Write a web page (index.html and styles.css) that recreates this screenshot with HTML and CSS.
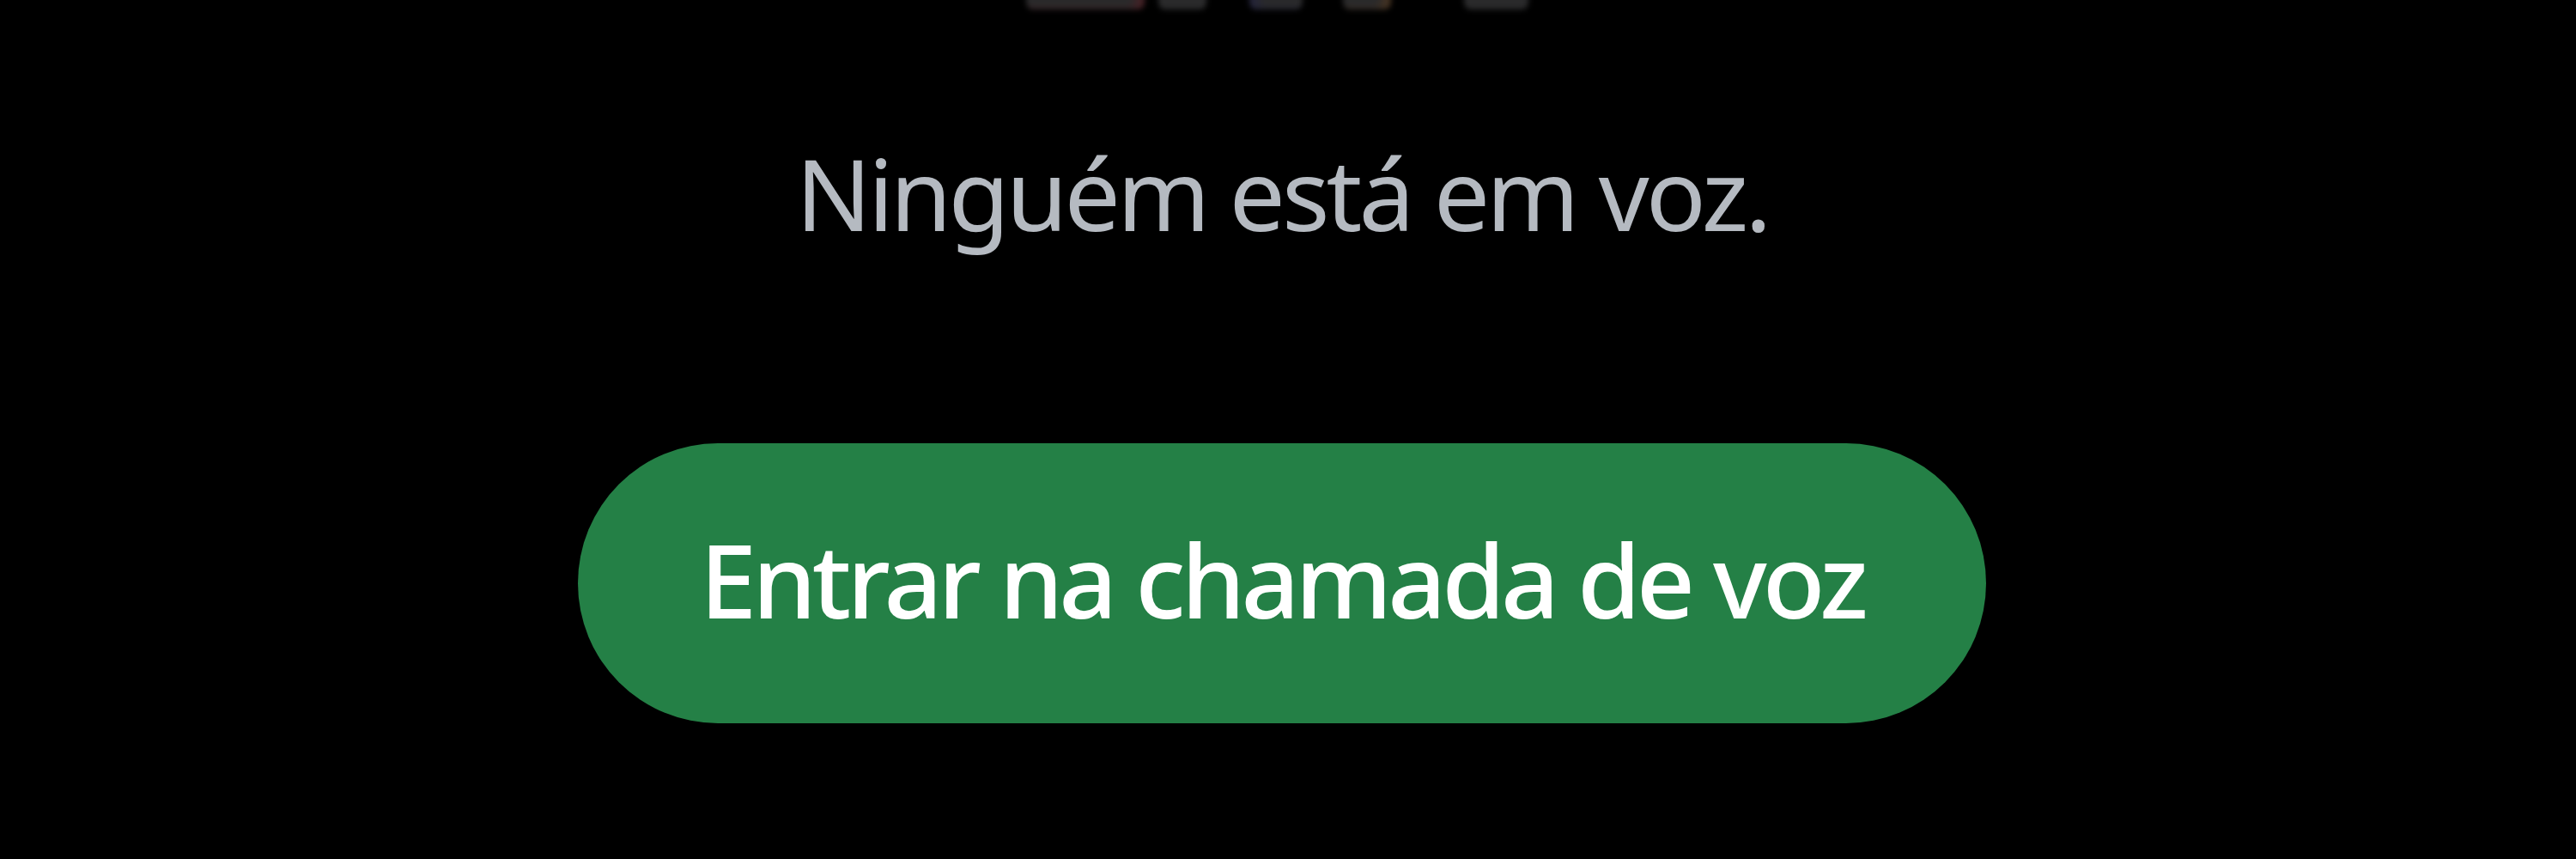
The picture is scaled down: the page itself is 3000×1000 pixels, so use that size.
FILE: index.html
```html
<!DOCTYPE html>
<html lang="pt-BR">
<head>
    <meta charset="UTF-8">
    <meta name="viewport" content="width=device-width, initial-scale=1.0">
    <title>Canal de voz</title>
    <link rel="stylesheet" href="styles.css">
</head>
<body>
    <div class="stage">
        <div class="ghost-row">
            <span class="ghost wide tint-red"></span>
            <span class="ghost small"></span>
            <span class="ghost mid tint-blue"></span>
            <span class="ghost small tint-orange"></span>
            <span class="ghost last"></span>
        </div>
        <p class="empty-text">Ninguém está em voz.</p>
        <button class="join-btn">Entrar na chamada de voz</button>
    </div>
</body>
</html>
```

FILE: styles.css
```css
* {
    margin: 0;
    padding: 0;
    box-sizing: border-box;
}

body {
    background: #000;
    height: 1000px;
    overflow: hidden;
    font-family: 'Noto Sans', 'Open Sans', sans-serif;
}

.stage {
    display: flex;
    flex-direction: column;
    align-items: center;
    padding-right: 14px;
}

/* blurred bottoms of the row above, mostly cut off */
.ghost-row {
    display: flex;
    height: 12px;
    margin-left: -12px;
    overflow: visible;
}

.ghost {
    display: block;
    height: 24px;
    margin-top: -13px;
    border-radius: 8px;
    background: #2a2a2b;
    filter: blur(3px);
}

.ghost.wide {
    width: 138px;
}

.ghost.small {
    width: 56px;
    margin-left: 16px;
}

.ghost.mid {
    width: 62px;
    margin-left: 50px;
}

.ghost.tint-orange {
    margin-left: 47px;
    box-shadow: inset -10px 0 8px rgba(120, 70, 20, 0.35);
}

.ghost.tint-red {
    box-shadow: inset -10px 0 8px rgba(110, 20, 30, 0.4);
}

.ghost.tint-blue {
    box-shadow: inset 10px 0 8px rgba(30, 30, 80, 0.4);
}

.ghost.last {
    width: 75px;
    margin-left: 85px;
}

.empty-text {
    margin-top: 140px;
    font-size: 116px;
    line-height: 145px;
    letter-spacing: -4px;
    color: #b5bac1;
    font-weight: 400;
}

.join-btn {
    margin-top: 219px;
    height: 326px;
    padding: 0 142px 10px;
    border: none;
    border-radius: 163px;
    background: #248046;
    color: #fff;
    font-family: 'Noto Sans', 'Open Sans', sans-serif;
    font-size: 119px;
    line-height: 149px;
    font-weight: 500;
    letter-spacing: -5px;
    cursor: pointer;
}
```
